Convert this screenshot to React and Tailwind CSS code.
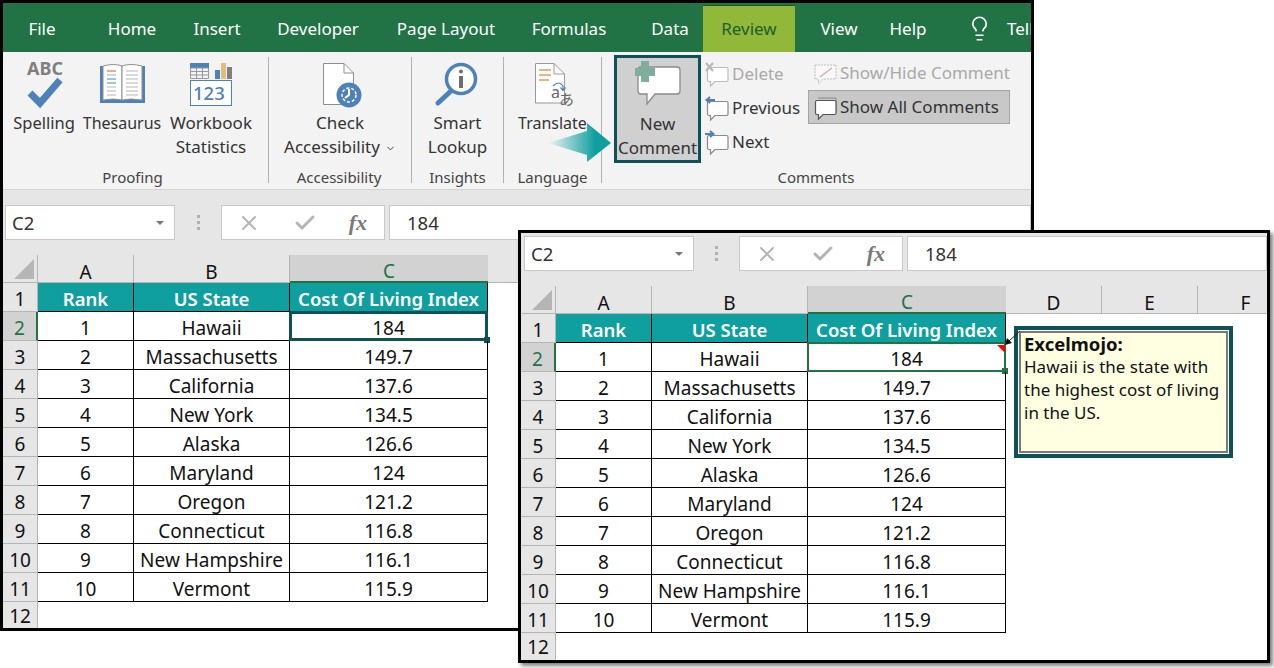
import React from "react";
import { ChevronDown, Lightbulb, X, Check } from "lucide-react";

const ui = "font-['Noto_Sans',sans-serif]";

const tabs = [
  { name: "File", w: "w-[66px]" },
  { name: "Home", w: "w-[114px]" },
  { name: "Insert", w: "w-[56px]" },
  { name: "Developer", w: "w-[146px]" },
  { name: "Page Layout", w: "w-[110px]" },
  { name: "Formulas", w: "w-[136px]" },
  { name: "Data", w: "w-[66px]" },
  { name: "Review", w: "w-[92px]", active: true },
  { name: "View", w: "w-[88px]" },
  { name: "Help", w: "w-[50px]" },
];

const states = [
  ["1", "Hawaii", "184"],
  ["2", "Massachusetts", "149.7"],
  ["3", "California", "137.6"],
  ["4", "New York", "134.5"],
  ["5", "Alaska", "126.6"],
  ["6", "Maryland", "124"],
  ["7", "Oregon", "121.2"],
  ["8", "Connecticut", "116.8"],
  ["9", "New Hampshire", "116.1"],
  ["10", "Vermont", "115.9"],
];

// bubble used by the small comment buttons
const Bubble = ({ stroke = "#8a8a8a", fill = "#ffffff" }) => (
  <path
    d="M5 6.5 H22.5 Q24 6.5 24 8 V19 Q24 20.5 22.5 20.5 H11 L6.5 25 V20.5 H5 Q3.5 20.5 3.5 19 V8 Q3.5 6.5 5 6.5 Z"
    fill={fill}
    stroke={stroke}
    strokeWidth="1.2"
  />
);

const SmallIcon = ({ children, stroke, fill }) => (
  <svg width="26" height="27" viewBox="0 0 26 27" className="shrink-0">
    <Bubble stroke={stroke} fill={fill} />
    {children}
  </svg>
);

const LargeButton = ({ icon, lines, w, chevron, text = "" }) => (
  <div className={`${w} ${text} flex flex-col items-center`}>
    <div className="h-[54px] flex justify-center">{icon}</div>
    {lines.map((l, i) => (
      <div key={i} className="h-[24px] leading-[24px] whitespace-nowrap flex items-center">
        {l}
        {chevron && i === lines.length - 1 && <ChevronDown size={11} className="ml-[5px] mt-[2px]" />}
      </div>
    ))}
  </div>
);

const Group = ({ label, w, children, last, labelPad = "" }) => (
  <div className={`${w} h-[126px] mt-[5px] flex flex-col shrink-0 ${last ? "" : "border-r border-[#b1b1b1]"}`}>
    <div className="flex-1 flex min-h-0">{children}</div>
    <div className={`${labelPad} text-center text-[15px] leading-[20px] h-[20px] -mb-[4px] text-[#444]`}>{label}</div>
  </div>
);

const SpellingIcon = (
  <svg width="44" height="54" viewBox="22 57 44 54">
    <text x="27" y="75" fontFamily="Noto Sans" fontWeight="700" fontSize="18" fill="#7f7f7f">ABC</text>
    <path d="M30 93 L40 103 L60 80" fill="none" stroke="#4d82b8" strokeWidth="7" />
  </svg>
);

const BookIcon = (
  <svg width="50" height="54" viewBox="97 57 50 54">
    <path d="M100 66 H105 V98 H140 V66 H145 V103 H100 Z" fill="#4d82b8" />
    <path d="M103 66 Q114 63 122 66 V100 Q114 98 103 100 Z" fill="#fff" stroke="#8f8f8f" />
    <path d="M122 66 Q130 63 142 66 V100 Q130 98 122 100 Z" fill="#fff" stroke="#8f8f8f" />
    <path d="M107 71 H116" stroke="#d8572a" />
    <path d="M107 75 H116" stroke="#aaa" />
    <path d="M107 79 H116 M107 83 H116" stroke="#4d82b8" />
    <path d="M107 87 H116 M107 91 H116 M107 95 H116 M126 71 H138 M126 75 H138 M126 79 H138 M126 83 H138 M126 87 H138 M126 91 H138 M126 95 H138" stroke="#b5b5b5" />
  </svg>
);

const StatsIcon = (
  <svg width="46" height="54" viewBox="188 57 46 54">
    <rect x="190" y="63" width="19" height="5" fill="#4d82b8" />
    <path d="M190.5 68 H208.5 V78.5 H190.5 Z M190.5 71.5 H208.5 M190.5 75 H208.5 M196.5 68 V78.5 M202.5 68 V78.5" fill="none" stroke="#999" />
    <rect x="215" y="70" width="5" height="9" fill="#4d82b8" />
    <rect x="221" y="63" width="5" height="16" fill="#e2bd7c" />
    <rect x="227" y="67" width="5" height="12" fill="#7f7f7f" />
    <rect x="190.5" y="80.5" width="41" height="25" fill="#fff" stroke="#4d82b8" />
    <text x="193" y="100" fontFamily="Noto Sans" fontWeight="500" fontSize="18.5" fill="#4d82b8">123</text>
  </svg>
);

const AccessIcon = (
  <svg width="44" height="54" viewBox="320 57 44 54">
    <path d="M325.5 63.5 H346 L355.5 73 V104.5 H325.5 Z" fill="#fff" stroke="#8f8f8f" />
    <path d="M346 63.5 V73 H355.5" fill="none" stroke="#8f8f8f" />
    <circle cx="351" cy="95" r="12.5" fill="#4d82b8" />
    <circle cx="351" cy="95" r="7" fill="none" stroke="#fff" strokeWidth="1.5" strokeDasharray="3 2" />
    <path d="M351 89 V95 L347 98" fill="none" stroke="#fff" strokeWidth="2" />
  </svg>
);

const LookupIcon = (
  <svg width="50" height="54" viewBox="434 57 50 54">
    <path d="M452 91 L439 103" stroke="#4d82b8" strokeWidth="5" strokeLinecap="round" />
    <circle cx="462" cy="79" r="14.5" fill="#fff" stroke="#4d82b8" strokeWidth="3.5" />
    <circle cx="462" cy="71.5" r="2" fill="#6d6d6d" />
    <rect x="460" y="76" width="4" height="12" fill="#6d6d6d" />
  </svg>
);

const TranslateIcon = (
  <svg width="44" height="54" viewBox="532 57 44 54">
    <path d="M536.5 63.5 H555 L565.5 74 V103 H536.5 Z" fill="#fff" stroke="#9a9a9a" />
    <path d="M555 63.5 V74 H565.5" fill="none" stroke="#9a9a9a" />
    <path d="M540 70 H552 M540 75 H552 M540 80 H550" stroke="#e39a5a" strokeWidth="1.3" />
    <path d="M554 86 Q560 80 564 86 V90 M561.5 87.5 L564 90.5 L566.5 87.5" fill="none" stroke="#4d82b8" strokeWidth="1.2" />
    <text x="552" y="98" fontFamily="Noto Sans" fontSize="16" fill="#666">a</text>
    <text x="560" y="105" fontFamily="Noto Sans CJK JP" fontSize="15" fill="#666">あ</text>
  </svg>
);

const NewCommentIcon = (
  <svg width="60" height="54" viewBox="627 57 60 54">
    <path d="M640 66 H676 Q679 66 679 69 V90 Q679 93 676 93 H654 L646 103 V93 H640 Q637 93 637 90 V69 Q637 66 640 66 Z" fill="#fff" stroke="#8a8a8a" strokeWidth="1.3" />
    <path d="M640 60 H648 V67 H654 V75 H648 V81 H640 V75 H634 V67 H640 Z" fill="#7fae9d" />
  </svg>
);

const Ribbon = () => (
  <div className={`${ui} h-[138px] bg-[#f3f3f3] border-b border-[#d2d2d2] flex text-[17px] text-[#333] shrink-0`}>
    <Group label="Proofing" w="w-[266px]" labelPad="pr-[6px]">
      <div className="w-[2px]" />
      <LargeButton w="w-[78px]" text="text-[16.5px]" icon={SpellingIcon} lines={["Spelling"]} />
      <LargeButton w="w-[78px]" text="text-[16px]" icon={BookIcon} lines={["Thesaurus"]} />
      <LargeButton w="w-[100px]" icon={StatsIcon} lines={["Workbook", "Statistics"]} />
    </Group>
    <Group label="Accessibility" w="w-[143px]" labelPad="pr-[2px]">
      <LargeButton w="w-full" icon={AccessIcon} lines={["Check", "Accessibility"]} chevron />
    </Group>
    <Group label="Insights" w="w-[92px]">
      <LargeButton w="w-full" icon={LookupIcon} lines={["Smart", "Lookup"]} />
    </Group>
    <Group label="Language" w="w-[98px]">
      <LargeButton w="w-full" text="text-[16px]" icon={TranslateIcon} lines={["Translate"]} />
    </Group>
    <Group label="Comments" w="w-[428px]" last>
      <div className="ml-[12px] w-[87px] h-[108px] -mt-[2px] border-[3px] border-[#0e5257] bg-[#d0d0d0] flex flex-col items-center shrink-0">
        <div>{NewCommentIcon}</div>
        <div className="h-[24px] leading-[24px]">New</div>
        <div className="h-[24px] leading-[24px]">Comment</div>
      </div>
      <div className="ml-[3px] w-[104px] flex flex-col shrink-0">
        <div className="h-[34px] flex items-center gap-[2px] text-[#a9a9a9]">
          <SmallIcon stroke="#bdbdbd">
            <path d="M2 2 L9 10 M9 2 L2 10" stroke="#b5b5b5" strokeWidth="2" />
          </SmallIcon>
          Delete
        </div>
        <div className="h-[34px] flex items-center gap-[2px]">
          <SmallIcon>
            <path d="M11 5 H3 M6 2 L2.5 5 L6 8" fill="none" stroke="#4d82b8" strokeWidth="2" />
          </SmallIcon>
          Previous
        </div>
        <div className="h-[34px] flex items-center gap-[2px]">
          <SmallIcon>
            <path d="M1 5 H9 M6 2 L9.5 5 L6 8" fill="none" stroke="#4d82b8" strokeWidth="2" />
          </SmallIcon>
          Next
        </div>
      </div>
      <div className="-mt-[1px] flex flex-col shrink-0">
        <div className="h-[34px] pl-[4px] flex items-center gap-[2px] text-[#a9a9a9]">
          <svg width="26" height="27" viewBox="0 0 26 27" className="shrink-0">
            <path d="M3 5 H24 V19 H11 L6.5 24 V19 H3 Z" fill="#f8f8f8" stroke="#bdbdbd" strokeDasharray="2 1" />
            <path d="M8 17 L20 8" stroke="#c9a9b0" strokeWidth="1.2" />
          </svg>
          Show/Hide Comment
        </div>
        <div className="h-[34px] w-[202px] pl-[3px] flex items-center gap-[2px] bg-[#c8c8c8] border border-[#a3a3a3]">
          <svg width="26" height="27" viewBox="0 0 26 27" className="shrink-0">
            <path d="M6 4 H24 V17" fill="none" stroke="#8a8a8a" />
            <Bubble stroke="#555" />
          </svg>
          Show All Comments
        </div>
      </div>
    </Group>
  </div>
);

const FormulaBar = ({ pad, h, dots }) => (
  <div className={`${pad} ${h} ${ui} bg-[#e6e6e6] flex items-start text-[18.5px] text-[#333] shrink-0`}>
    <div className="w-[170px] h-[35px] bg-white border border-[#c8c8c8] flex items-center justify-between pl-[6px] pr-[10px]">
      C2
      <span className="w-0 h-0 border-x-[4px] border-x-transparent border-t-[4px] border-t-[#777]" />
    </div>
    <div className={`${dots} h-[35px] flex flex-col items-center justify-center gap-[3px]`}>
      <span className="w-[3px] h-[3px] bg-[#b0b0b0]" />
      <span className="w-[3px] h-[3px] bg-[#b0b0b0]" />
      <span className="w-[3px] h-[3px] bg-[#b0b0b0]" />
    </div>
    <div className="w-[164px] h-[35px] bg-white border border-[#c8c8c8] flex items-center justify-between pl-[15px] pr-[17px] text-[#7a7a7a]">
      <X size={24} strokeWidth={2} className="text-[#b5b5b5]" />
      <Check size={24} strokeWidth={3} className="text-[#b5b5b5]" />
      <span className="font-['Liberation_Serif',serif] italic font-bold text-[22px]">fx</span>
    </div>
    <div className="ml-[4px] flex-1 h-[35px] bg-white border border-[#c8c8c8] flex items-center pl-[17px]">184</div>
  </div>
);

const Sheet = ({ cols, extra = [], thick }) => (
  <div className={`${ui} flex-1 min-h-0 flex flex-col bg-white text-[19px] text-[#111] overflow-hidden`}>
    <div className="h-[28px] shrink-0 flex bg-[#e6e6e6] border-b border-[#b5b5b5]">
      <div className="w-[35px] shrink-0 border-r border-[#b5b5b5] relative flex items-end justify-end p-[3px]">
        <span className="w-0 h-0 border-l-[20px] border-l-transparent border-b-[20px] border-b-[#b5b5b5]" />
      </div>
      {["A", "B", "C"].map((c, i) => (
        <div
          key={c}
          style={{ width: cols[i] }}
          className={`shrink-0 pt-[7px] flex items-center justify-center ${
            c === "C" ? "bg-[#d2d2d2] text-[#217346] border-b-2 border-[#217346] h-[28px]" : "border-r border-[#b5b5b5]"
          }`}
        >
          {c}
        </div>
      ))}
      {extra.map((c) => (
        <div key={c} className="w-[96px] shrink-0 pt-[7px] flex items-center justify-center border-r border-[#b5b5b5]">
          {c}
        </div>
      ))}
    </div>

    <div className="h-[29px] shrink-0 flex">
      <div className="w-[35px] shrink-0 pt-[4px] bg-[#e6e6e6] border-r border-b border-[#b5b5b5] flex items-center justify-center">1</div>
      {["Rank", "US State", "Cost Of Living Index"].map((t, i) => (
        <div
          key={t}
          style={{ width: cols[i] }}
          className="shrink-0 pt-[4px] bg-[#0f9f9f] text-white text-[18.5px] font-semibold flex items-center justify-center border-r border-b border-black whitespace-nowrap"
        >
          {t}
        </div>
      ))}
    </div>

    {states.map((row, r) => (
      <div key={r} className="h-[29px] shrink-0 flex">
        <div
          className={`w-[35px] shrink-0 pt-[4px] border-b flex items-center justify-center ${
            r === 0
              ? "bg-[#d2d2d2] text-[#217346] border-r-2 border-r-[#217346] border-b-[#b5b5b5]"
              : "bg-[#e6e6e6] border-r border-[#b5b5b5]"
          }`}
        >
          {r + 2}
        </div>
        {row.map((cell, i) => (
          <div
            key={i}
            style={{ width: cols[i] }}
            className="shrink-0 pt-[4px] relative flex items-center justify-center border-r border-b border-black whitespace-nowrap"
          >
            {cell}
            {r === 0 && i === 2 && (
              <>
                <span
                  className={`absolute -inset-x-[1px] -top-[1px] -bottom-[1px] ${
                    thick ? "border-[3px] border-[#0e5257]" : "border-2 border-[#217346]"
                  }`}
                />
                <span className={`absolute -right-[3px] -bottom-[3px] w-[6px] h-[6px] ${thick ? "bg-[#0e5257]" : "bg-[#217346]"}`} />
                {!thick && (
                  <span className="absolute right-0 top-[2px] w-0 h-0 border-l-[8px] border-l-transparent border-t-[8px] border-t-[#ff0000]" />
                )}
              </>
            )}
          </div>
        ))}
      </div>
    ))}

    <div className="flex-1 min-h-0 w-[35px] pt-[2px] bg-[#e6e6e6] border-r border-[#b5b5b5] flex items-center justify-center">12</div>
  </div>
);

const Window = ({ children, className }) => (
  <div className={`flex flex-col bg-[#e6e6e6] border-[3px] border-black overflow-hidden ${className}`}>{children}</div>
);

const App = () => {
  return (
    <div className="relative w-[1274px] h-[668px] bg-white overflow-hidden">
      <Window className="w-[1034px] h-[631px]">
        <div className={`${ui} h-[49px] bg-[#217346] flex items-center pl-[6px] text-[17px] text-white shrink-0`}>
          {tabs.map((t) => (
            <div
              key={t.name}
              className={`${t.w} shrink-0 text-center whitespace-nowrap ${
                t.active
                  ? "h-[47px] mt-[2px] leading-[45px] bg-[#92b83a] text-[#1d5f2c] border-t border-[#15552c]"
                  : "pt-[2px]"
              }`}
            >
              {t.name}
            </div>
          ))}
          <Lightbulb size={27} strokeWidth={1.5} className="ml-[33px] mt-[2px] shrink-0" />
          <span className="ml-[14px] mt-[2px] shrink-0">Tell</span>
        </div>
        <Ribbon />
        <FormulaBar pad="pl-[2px] pt-[15px]" h="h-[65px]" dots="w-[46px]" />
        <Sheet cols={[96, 156, 198]} thick />
      </Window>

      {/* arrow over the ribbon */}
      <svg width="66" height="42" viewBox="548 122 66 42" className="absolute left-[548px] top-[122px]">
        <defs>
          <linearGradient id="arrowFade" x1="0" x2="1" y1="0" y2="0">
            <stop offset="0" stopColor="#0f9f9f" stopOpacity="0" />
            <stop offset="0.75" stopColor="#0f9f9f" />
          </linearGradient>
        </defs>
        <polygon points="548,143 587,131 587,123 611,143 587,162 587,155" fill="url(#arrowFade)" />
      </svg>

      <Window className="absolute left-[518px] top-[230px] w-[752px] h-[433px] shadow-[3px_3px_4px_rgba(0,0,0,0.5)]">
        <FormulaBar pad="pl-[3px] pt-[3px]" h="h-[53px]" dots="w-[45px]" />
        <Sheet cols={[96, 156, 198]} extra={["D", "E", "F"]} />
      </Window>

      {/* comment box */}
      <div className="absolute left-[1014px] top-[326px] w-[219px] h-[132px] border-[4px] border-[#0e5257] bg-white p-[1px]">
        <div className="h-full border-2 border-[#7a7a7a] bg-[#ffffe1] pl-[3px] font-['Noto_Sans',sans-serif] text-[17px] leading-[23px] text-[#111]">
          <div className="font-bold text-[18.5px] -mt-[1px]">Excelmojo:</div>
          <div>Hawaii is the state with</div>
          <div>the highest cost of living</div>
          <div>in the US.</div>
        </div>
      </div>
      <svg width="20" height="18" viewBox="1004 329 20 18" className="absolute left-[1004px] top-[329px]">
        <path d="M1020 331 L1009 341" stroke="#222" />
        <path d="M1005 345 L1007 338 L1012 343 Z" fill="#111" />
      </svg>
    </div>
  );
};

export default App;
